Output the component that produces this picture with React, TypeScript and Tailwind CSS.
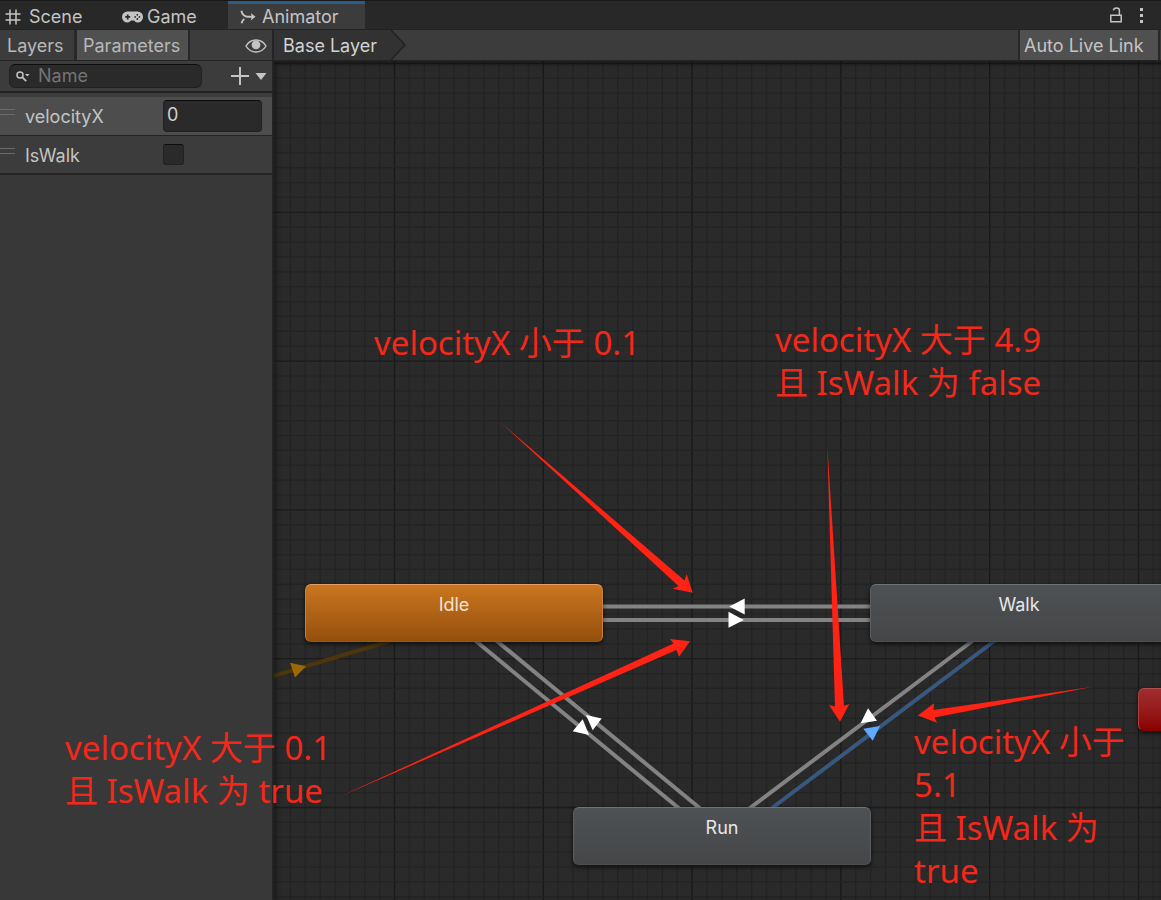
import { useState } from "react";

const STEP = 14.88;
const lines = (first: number, count: number) =>
  Array.from({ length: count }, (_, i) => ({ at: first + i * STEP, major: i % 10 === 0 }));

function GridLines() {
  return (
    <g>
      {lines(-28.3, 180).map((l) => (
        <line key={"v" + l.at} x1={l.at} x2={l.at} y1={0} y2={2000} stroke={l.major ? "#191919" : "#232323"} strokeWidth={l.major ? 1.3 : 1.2} />
      ))}
      {lines(2.5, 140).map((l) => (
        <line key={"h" + l.at} y1={l.at} y2={l.at} x1={0} x2={2600} stroke={l.major ? "#1b1b1b" : "#232323"} strokeWidth={l.major ? 1.3 : 1.2} />
      ))}
    </g>
  );
}

function SceneIcon() {
  return (
    <svg width="16" height="16" viewBox="0 0 16 16" fill="none" stroke="#c4c4c4" strokeWidth="1.5" aria-hidden="true">
      <path d="M5 .5v15M11 .5v15M.5 5h15M.5 11h15" />
    </svg>
  );
}

function GameIcon() {
  return (
    <svg width="21" height="12" viewBox="0 0 21 12" aria-hidden="true">
      <path d="M5.5.5h10a5.4 5.4 0 0 1 0 11c-1.9 0-2.7-1.3-3.6-1.9H9.1c-.9.6-1.7 1.9-3.6 1.9a5.4 5.4 0 0 1 0-11Z" fill="#c4c4c4" />
      <path d="M5.700 3.400v5M3.200 5.900h5" stroke="#282828" strokeWidth="1.700" />
      <g fill="#282828">
        <circle cx="15.300" cy="3.800" r=".9" />
        <circle cx="15.300" cy="8" r=".9" />
        <circle cx="13.200" cy="5.900" r=".9" />
        <circle cx="17.400" cy="5.900" r=".9" />
      </g>
    </svg>
  );
}

function AnimatorIcon() {
  return (
    <svg width="16" height="14" viewBox="0 0 16 14" fill="none" aria-hidden="true">
      <path d="M1.300.8C2.200 4.200 4.200 6.800 8 6.800h4M1.500 13.200c.5-1.800 1.300-3.200 2.700-4.300" stroke="#c4c4c4" strokeWidth="1.900" />
      <path d="m10.800 3 4.700 3.800-4.700 3.800 1-3.800z" fill="#c4c4c4" />
    </svg>
  );
}

function EyeIcon() {
  return (
    <svg width="22" height="14" viewBox="0 0 22 14" aria-hidden="true">
      <path d="M1 7C3.4 3 7 1 11 1s7.600 2 10 6c-2.400 4-6 6-10 6S3.400 11 1 7Z" fill="none" stroke="#c4c4c4" strokeWidth="1.400" />
      <circle cx="11" cy="5.800" r="4.400" fill="#c4c4c4" />
    </svg>
  );
}

function LockIcon() {
  return (
    <svg width="12" height="16" viewBox="0 0 12 16" fill="none" stroke="#c4c4c4" strokeWidth="1.500" aria-hidden="true">
      <path d="M.8 8.300h10.400v6.400H.8zM9.400 8V3.400C9.400 2 8.200 1 6.400 1S3.600 1.800 3.400 3.300" />
    </svg>
  );
}

function SearchIcon() {
  return (
    <svg width="14" height="11" viewBox="0 0 14 11" className="shrink-0" aria-hidden="true">
      <circle cx="4" cy="4" r="3" fill="none" stroke="#c4c4c4" strokeWidth="1.500" />
      <path d="m6.200 6.200 4 4" stroke="#c4c4c4" strokeWidth="1.800" />
      <path d="M9 3h4.600l-2.300 2.600z" fill="#c4c4c4" />
    </svg>
  );
}

function Handle() {
  return (
    <span className="flex w-[15px] flex-col gap-1 pb-2">
      <span className="h-px bg-[#6a6a6a]" />
      <span className="h-px bg-[#6a6a6a]" />
    </span>
  );
}

const nodeBase = "absolute flex justify-center rounded-md pt-2 text-lg leading-6 shadow-[0_2px_5px_rgba(0,0,0,0.6)]";
const slate = " h-[58px] w-[298px] border border-t-[#707476] border-x-[#5b5e60] border-b-[#4c4e50] bg-linear-to-b from-[#4e5254] to-[#454648] text-[#e8e8e8]";

function StateGraph() {
  return (
    <section aria-label="State machine" className="relative flex-1 overflow-hidden bg-[#2a2a2a]">
      <svg className="absolute inset-0 h-full w-full" aria-hidden="true">
        <GridLines />
        <g transform="translate(-274 -61)">
          <g stroke="#838383" strokeWidth="4">
            <path d="M600 606.500H872M600 620H872M474 639.500 681 810M495 639.500 702 810M975 639 746 811" />
          </g>
          <path d="M997 639 768 811" stroke="#38597f" strokeWidth="4" />
          <path d="M270 677 390 641" stroke="#4d360b" strokeWidth="4" />
          <path d="m290 662.700 16 3.500-11 11.300z" fill="#9b6804" />
          <g fill="#ffffff">
            <path d="M729.300 606.500 744.700 598.500v16zM743.800 619.900 728.500 611.700v16zM586 715l15.700 3.500-9 11.700zM582.700 719.300l-10 12 16.300 3.700zM868 708.300l-7.400 15 16.400-2.600z" />
          </g>
          <path d="M863.300 728.700 880 726l-7.300 14.800z" fill="#5faaff" />
        </g>
      </svg>
      <div className="absolute inset-0 shadow-[inset_2px_3px_6px_rgba(0,0,0,0.35)]" />
      <div className={nodeBase + " left-[31px] top-[523px] h-[58px] w-[298px] border border-t-[#e0a060] border-x-[#c98038] border-b-[#9b5510] bg-linear-to-b from-[#cb7620] to-[#95500d] text-[#f2e2d2]"}>Idle</div>
      <div className={nodeBase + slate + " left-[596px] top-[523px]"}>Walk</div>
      <div className={nodeBase + slate + " left-[299px] top-[746px]"}>Run</div>
      <div className="absolute left-[864px] top-[627px] h-[43px] w-[298px] rounded-md border border-t-[#b05050] border-x-[#a84040] border-b-[#800000] bg-linear-to-b from-[#a02c2e] to-[#8c0000] shadow-[0_2px_5px_rgba(0,0,0,0.6)]" />
    </section>
  );
}

const note = "absolute whitespace-pre font-['Noto_Sans','Noto_Sans_CJK_SC',sans-serif] text-[33px] leading-[43px] text-[#f4281a]";

function Annotations() {
  return (
    <div className="pointer-events-none absolute inset-0 overflow-hidden">
      <svg className="absolute inset-0 h-full w-full" fill="#ff2316" aria-hidden="true">
        <path d="M499 421 684.500 580.500 686.700 574 692.700 592.700 672.700 588.700 678.500 586z" />
        <path d="M338 797.500 673.500 643.500 670 639 690 641.300 679 656.700 676.500 650z" />
        <path d="M827.300 446 844 706 849.300 704 840 721.700 829 705 835 706.500z" />
        <path d="M1093 686.800 933.500 710 934 703.300 918 715.500 937 722.700 934.500 717.500z" />
      </svg>
      <p className={note + " left-[374px] top-[321px]"}>velocityX 小于 0.1</p>
      <p className={note + " left-[775px] top-[318px]"}>{"velocityX 大于 4.9\n且 IsWalk 为 false"}</p>
      <p className={note + " left-[65px] top-[726px]"}>{"velocityX 大于 0.1\n且 IsWalk 为 true"}</p>
      <p className={note + " left-[914px] top-[720px]"}>{"velocityX 小于\n5.1\n且 IsWalk 为\ntrue"}</p>
    </div>
  );
}

export default function App() {
  const [velocity, setVelocity] = useState("0");
  const [walking, setWalking] = useState(false);
  return (
    <div className="relative flex min-h-screen flex-col overflow-hidden bg-[#383838] font-['Inter',sans-serif] text-lg leading-6 text-[#c4c4c4]">
      <header className="flex h-[30px] items-stretch border-b border-t border-b-[#232323] border-t-[#191919] bg-[#282828]">
        <nav className="flex flex-1">
          <button className="flex w-[116px] items-center gap-2 pl-[5px] pt-[3px]"><SceneIcon />Scene</button>
          <button className="flex w-28 items-center gap-1 pl-[6px] pt-[3px]"><GameIcon />Game</button>
          <button className="flex w-[137px] items-center gap-[6px] border-t-3 border-[#2c5d87] bg-[#3c3c3c] pl-3"><AnimatorIcon />Animator</button>
        </nav>
        <button aria-label="Lock" className="px-2"><LockIcon /></button>
        <button aria-label="More options" className="flex flex-col items-center justify-center gap-[3px] pl-[10px] pr-[18px]">
          <span className="size-[3px] bg-[#c4c4c4]" />
          <span className="size-[3px] bg-[#c4c4c4]" />
          <span className="size-[3px] bg-[#c4c4c4]" />
        </button>
      </header>
      <main className="flex flex-1">
        <aside className="flex w-[274px] shrink-0 flex-col border-r-2 border-[#232323]">
          <div className="flex h-[31px] border-b border-[#232323] bg-[#3c3c3c] pl-[2px]">
            <button className="w-[75px] border-r-3 border-[#282828] pl-[5px] pt-[2px] text-left text-[#b8b8b8]">Layers</button>
            <button className="w-[113px] border-r-2 border-[#282828] bg-[#505050] pt-[2px] pl-[6px] text-left text-[#b8b8b8]">Parameters</button>
            <button aria-label="Toggle visibility" className="ml-auto pr-[5px] pt-[2px]"><EyeIcon /></button>
          </div>
          <div className="flex h-8 items-center border-b-2 border-[#232323] bg-[#3c3c3c] pl-[9px]">
            <label className="flex h-6 w-[193px] items-center gap-2 rounded-md border border-[#212121] border-t-[#0d0d0d] bg-[#2a2a2a] pl-[6px]">
              <SearchIcon />
              <input aria-label="Search parameters" placeholder="Name" className="w-full min-w-0 bg-transparent outline-none placeholder:text-[#747474]" />
            </label>
            <button aria-label="Add parameter" className="ml-auto flex items-center gap-[6px] pr-[5px]">
              <svg width="18" height="18" viewBox="0 0 18 18" stroke="#c4c4c4" strokeWidth="2" aria-hidden="true"><path d="M9 0v18M0 9h18" /></svg>
              <svg width="12" height="7" viewBox="0 0 12 7" fill="#c4c4c4" aria-hidden="true"><path d="M.5 0h11L6 7z" /></svg>
            </button>
          </div>
          <div className="border-b-2 border-[#232323] bg-[#3c3c3c] pt-1">
            <div className="flex h-[39px] items-center border-b border-[#232323] bg-[#4d4d4d]">
              <Handle />
              <label htmlFor="velocity" className="w-[148px] pl-[10px] pt-[2px]">velocityX</label>
              <input id="velocity" value={velocity} onChange={(e) => setVelocity(e.target.value)} className="h-8 w-[99px] rounded-sm border border-[#212121] border-t-[#0d0d0d] bg-[#2a2a2a] pb-1 pl-[3px] text-[#d2d2d2] outline-none" />
            </div>
            <div className="flex h-[37px] items-center">
              <Handle />
              <label htmlFor="walk" className="w-[148px] pl-[10px] pt-[2px]">IsWalk</label>
              <input id="walk" type="checkbox" checked={walking} onChange={(e) => setWalking(e.target.checked)} className="size-[21px] appearance-none rounded-[3px] border border-[#212121] border-t-[#0d0d0d] bg-[#2a2a2a] checked:bg-[#c4c4c4]" />
            </div>
          </div>
        </aside>
        <div className="flex min-w-0 flex-1 flex-col">
          <div className="flex h-[31px] items-stretch justify-between border-b border-[#232323] bg-[#3c3c3c]">
            <button className="flex items-center text-[#d2d2d2]">
              <span className="flex h-full w-[115px] items-center whitespace-nowrap bg-[#323232] pl-[9px] pt-[2px]">Base Layer</span>
              <svg width="18" height="30" viewBox="0 0 18 30" aria-hidden="true">
                <path d="M0 0h2l14 15L2 30H0z" fill="#323232" />
                <path d="m2 0 14 15L2 30" fill="none" stroke="#222222" strokeWidth="1.500" />
              </svg>
            </button>
            <button className="mr-[1px] w-[142px] border-x-2 border-[#282828] bg-[#505050] pl-1 pt-[2px] text-left">Auto Live Link</button>
          </div>
          <StateGraph />
        </div>
      </main>
      <Annotations />
    </div>
  );
}
